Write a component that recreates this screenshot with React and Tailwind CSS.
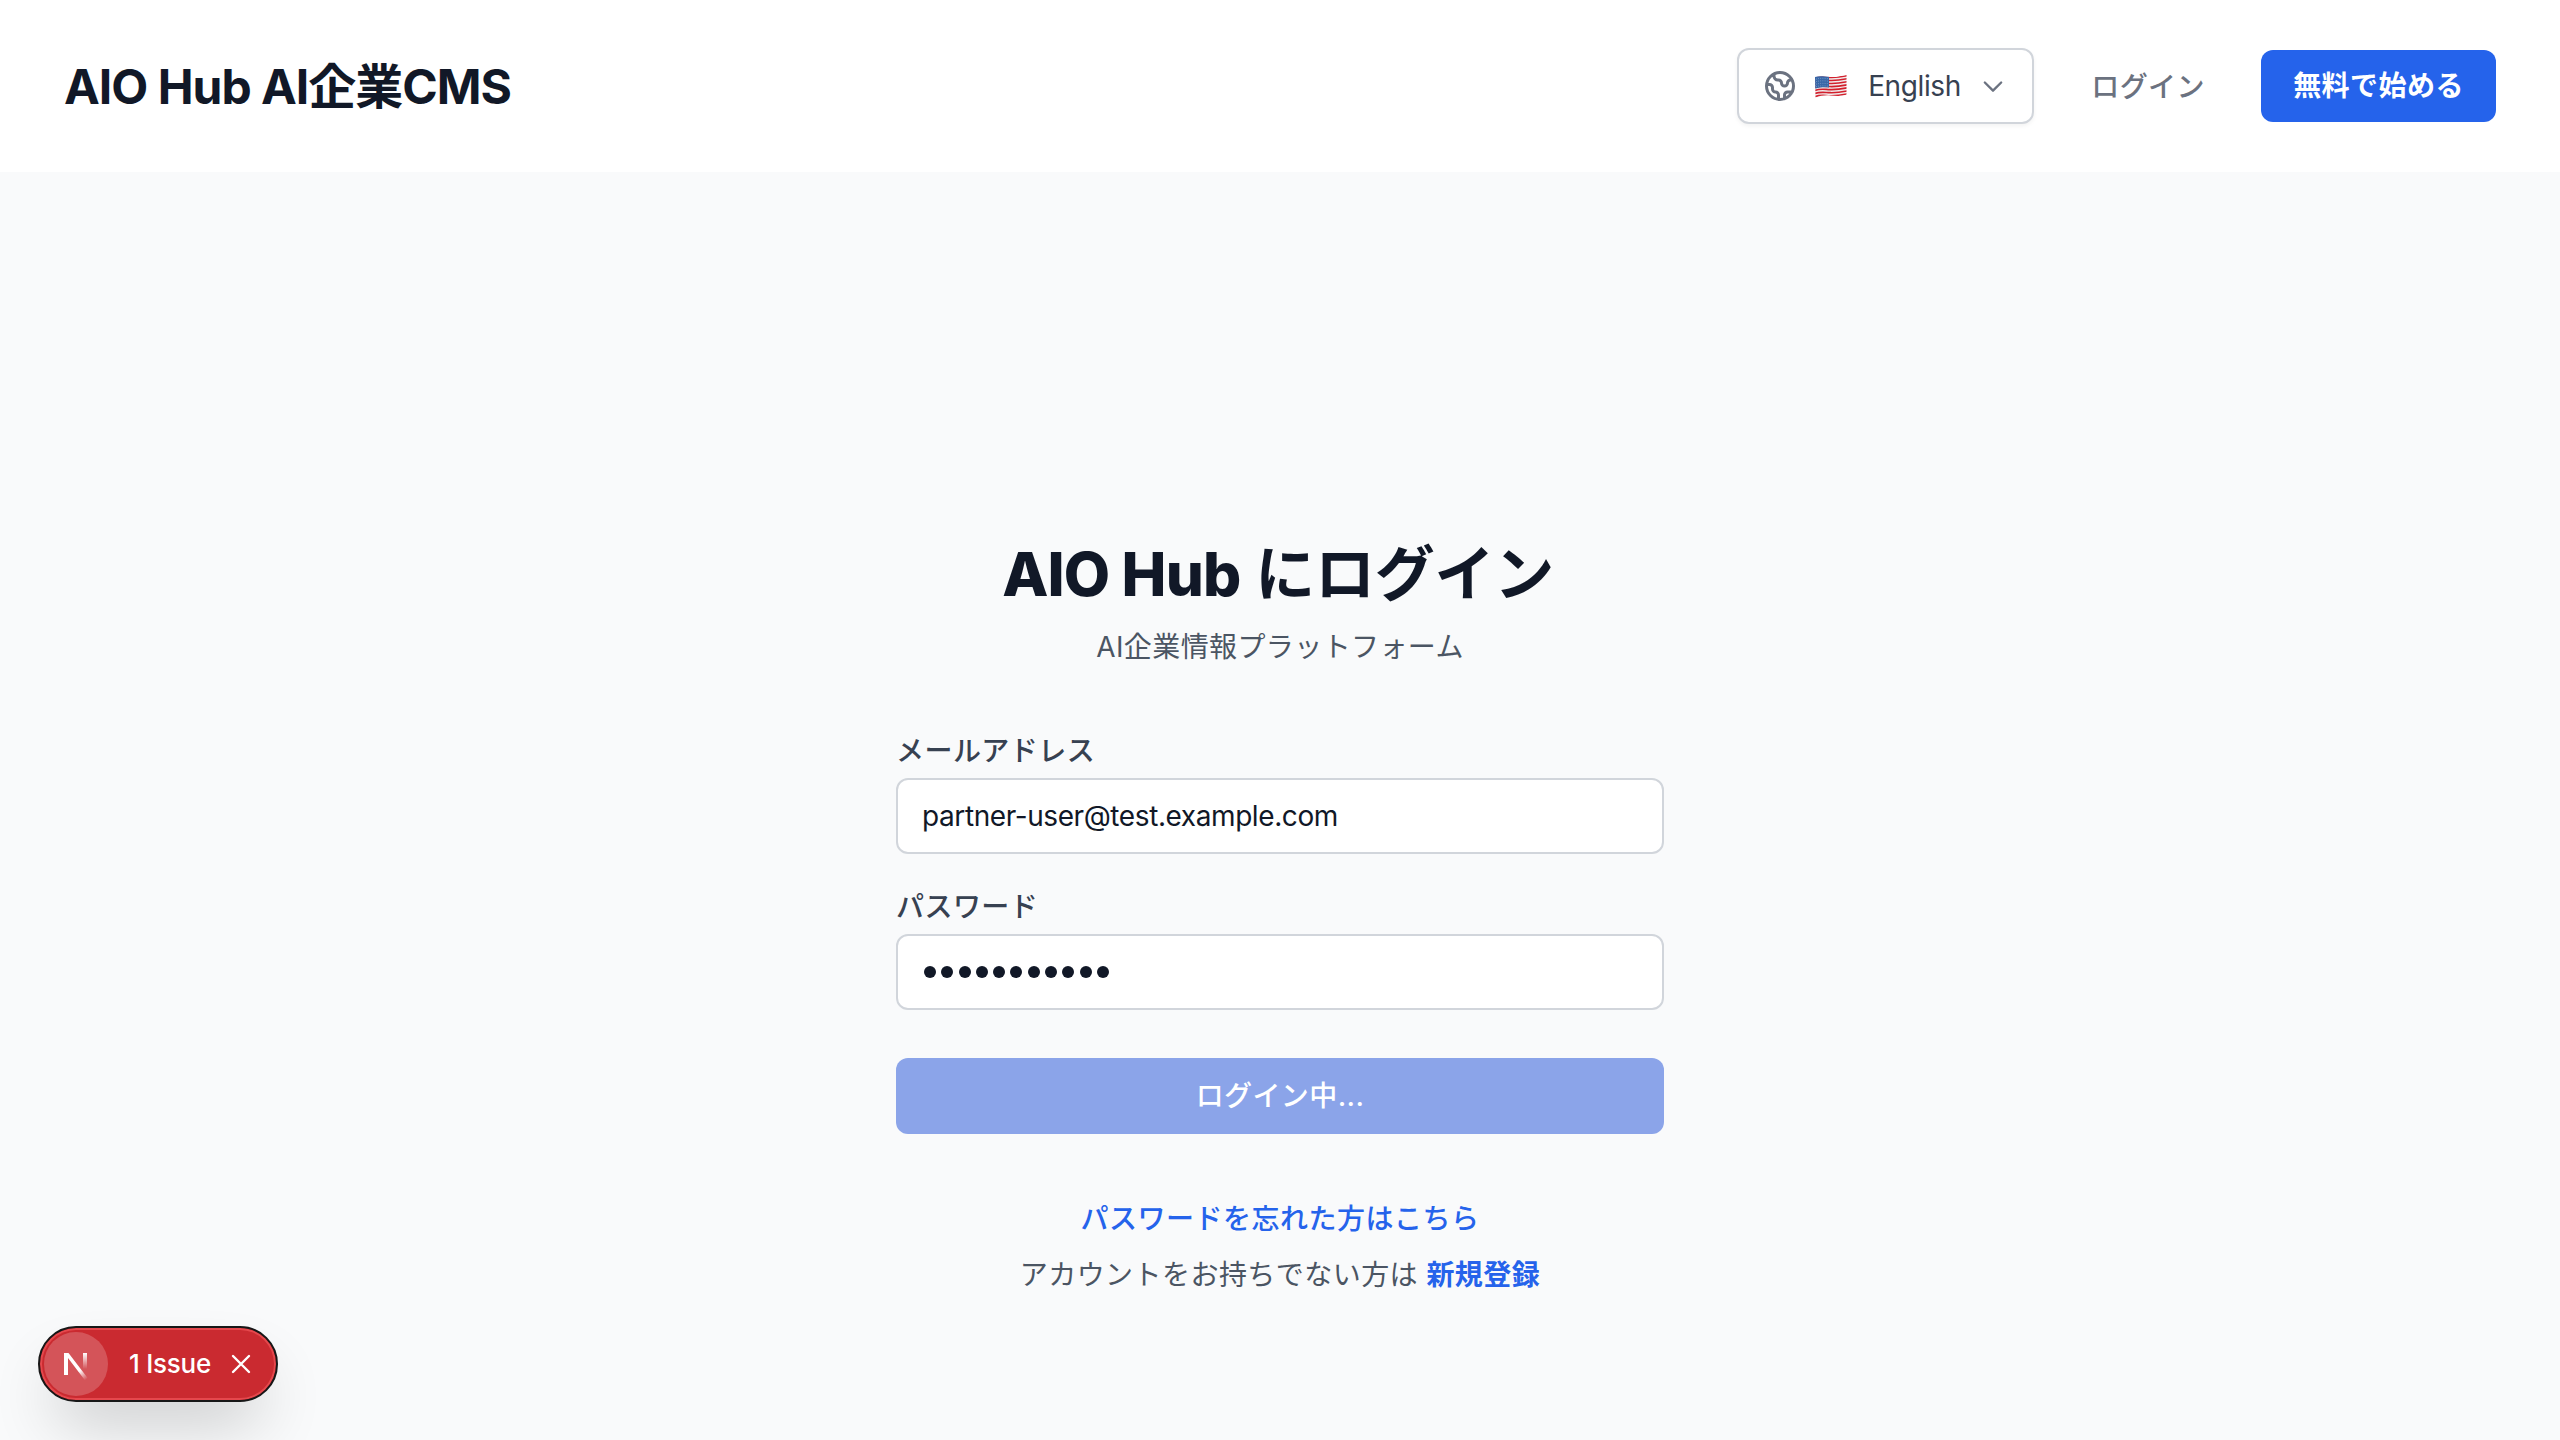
import React from "react";

function Globe() {
  return (
    <svg className="size-9 text-[#6b7280]" viewBox="0 0 24 24" fill="none" stroke="currentColor" strokeWidth="2" strokeLinecap="round" strokeLinejoin="round">
      <path d="M3.055 11H5a2 2 0 012 2v1a2 2 0 002 2 2 2 0 012 2v2.945M8 3.935V5.5A2.5 2.5 0 0010.5 8h.5a2 2 0 012 2 2 2 0 104 0 2 2 0 012-2h1.064M15 20.488V18a2 2 0 012-2h3.064M21 12a9 9 0 11-18 0 9 9 0 0118 0z" />
    </svg>
  );
}

function Flag() {
  const stripes = [0, 1, 2, 3, 4, 5, 6];
  return (
    <svg className="h-[23px] w-8" viewBox="0 0 32 23">
      <defs>
        <clipPath id="wave">
          <path d="M0 2C5 .5 9 1.500 15 2S26 1 31.500 0V19.500C26 21.500 22 21 16 20.500S5 20.500 .500 23Z" />
        </clipPath>
      </defs>
      <g clipPath="url(#wave)">
        <rect width="32" height="23" fill="#f1eded" />
        {stripes.map((i) => (
          <path key={i} transform={`translate(0 ${i * 3.05})`} d="M0 3.200C5 1.300 9 2.200 15 2.400S26 1.900 32 .700" stroke="#d3202d" strokeWidth="1.600" fill="none" />
        ))}
        <path d="M0 0H14V12.400C9 12 5 12.200 0 13.800Z" fill="#3867a8" />
        <g fill="none" stroke="#9fb6d6" strokeWidth=".7" strokeDasharray=".8 1.400">
          <path d="M1 4.200C5 3 9 3.200 13.500 3.700" />
          <path d="M1 6.700C5 5.500 9 5.700 13.500 6.200" />
          <path d="M1 9.200C5 8 9 8.200 13.500 8.700" />
          <path d="M1 11.700C5 10.500 9 10.700 13.500 11.200" />
        </g>
      </g>
    </svg>
  );
}

function Header() {
  return (
    <header className="flex h-[172px] items-center justify-between bg-white px-16">
      <div className="pt-0.5 text-[48px] leading-[64px] font-bold tracking-[-1px] text-[#111827]">AIO Hub AI企業CMS</div>
      <div className="flex items-center">
        <button className="flex h-[76px] w-[297px] items-center rounded-xl border-2 border-[#d1d5db] bg-white pl-[23px] shadow-[0_2px_4px_rgba(0,0,0,0.05)]">
          <Globe />
          <span className="ml-[17px]"><Flag /></span>
          <span className="ml-[21px] text-[28px] leading-10 tracking-[-0.4px] text-[#374151]">English</span>
          <svg className="ml-[18px] size-7 text-[#6b7280]" viewBox="0 0 24 24" fill="none" stroke="currentColor" strokeWidth="2" strokeLinecap="round" strokeLinejoin="round"><path d="M19 9l-7 7-7-7" /></svg>
        </button>
        <a className="ml-[57px] pt-0.5 text-[28px] leading-[38px] font-medium tracking-[0.45px] text-[#6b7280]">ログイン</a>
        <button className="ml-14 h-[72px] w-[235px] rounded-xl bg-[#2563eb] text-[28px] leading-10 font-semibold tracking-[0.45px] text-white">無料で始める</button>
      </div>
    </header>
  );
}

function Field({ label, children }) {
  return (
    <div>
      <div className="pt-0.5 text-[28px] leading-[38px] font-medium tracking-[0.45px] text-[#374151]">{label}</div>
      <div className="mt-2 flex h-[76px] items-center rounded-xl border-2 border-[#d1d5db] bg-white px-6 text-[28px] tracking-[-0.41px] text-[#111827]">{children}</div>
    </div>
  );
}

function IssueBadge() {
  return (
    <div className="absolute top-[1326px] left-[38px] flex h-[76px] w-60 items-center rounded-full border-2 border-[#171717] bg-[#ca2a30] pl-1 shadow-[inset_0_0_0_2px_#e5484d,0_32px_64px_-16px_rgba(0,0,0,0.24)]">
      <div className="flex size-16 items-center justify-center rounded-full bg-white/20">
        <svg className="size-10" viewBox="0 0 40 40" fill="none">
          <defs>
            <linearGradient id="diagonal" x1="20" y1="20" x2="31" y2="35" gradientUnits="userSpaceOnUse">
              <stop stopColor="#fff" /><stop offset=".4" stopColor="#fff" /><stop offset="1" stopColor="#fff" stopOpacity="0" />
            </linearGradient>
            <linearGradient id="stem" x1="29" y1="9" x2="29" y2="25" gradientUnits="userSpaceOnUse">
              <stop stopColor="#fff" /><stop offset="1" stopColor="#fff" stopOpacity="0" />
            </linearGradient>
          </defs>
          <path d="M8 31V9h4.500L32 34.500 29.500 37 12 14V31Z" fill="url(#diagonal)" />
          <path d="M27 9h4v16h-4z" fill="url(#stem)" />
        </svg>
      </div>
      <span className="ml-[21px] text-[26px] leading-8 font-medium tracking-[-0.25px] text-white">1 Issue</span>
      <svg className="ml-[18px] size-6" viewBox="0 0 24 24" fill="none" stroke="#fff" strokeWidth="2.400" strokeLinecap="round"><path d="M4 4l16 16M20 4L4 20" /></svg>
    </div>
  );
}

export default function App() {
  return (
    <div lang="ja" className="relative h-[1440px] w-[2560px] overflow-hidden bg-[#f9fafb] font-['Inter','Noto_Sans_CJK_JP',sans-serif]">
      <Header />
      <main className="mx-auto w-[768px] pt-[362px]">
        <h1 className="-ml-1 text-center text-[60px] leading-[80px] font-extrabold tracking-[-0.85px] text-[#111827]">
          AIO Hub<span className="ml-[15px] font-bold tracking-[-0.3px]">にログイン</span>
        </h1>
        <p className="mt-3 pt-0.5 text-center text-[28px] leading-[38px] tracking-[0.4px] text-[#4b5563]">AI企業情報プラットフォーム</p>
        <div className="mt-16 flex flex-col gap-8">
          <Field label="メールアドレス">partner-user@test.example.com</Field>
          <Field label="パスワード">
            <span className="flex gap-[5.3px] pl-0.5">
              {Array.from({ length: 11 }, (_, i) => <i key={i} className="size-3 rounded-full bg-[#111827]" />)}
            </span>
          </Field>
        </div>
        <button className="mt-12 flex h-[76px] w-full items-center justify-center rounded-xl bg-[#8ba4e9] text-[28px] font-medium tracking-[0.4px] text-white">ログイン中...</button>
        <p className="mt-16 pt-0.5 text-center text-[28px] leading-[38px] font-medium tracking-[0.5px] text-[#2563eb]">パスワードを忘れた方はこちら</p>
        <p className="mt-4 pt-0.5 text-center text-[28px] leading-[38px] tracking-[0.45px] text-[#4b5563]">アカウントをお持ちでない方は <a className="font-semibold text-[#2563eb]">新規登録</a></p>
      </main>
      <IssueBadge />
    </div>
  );
}
